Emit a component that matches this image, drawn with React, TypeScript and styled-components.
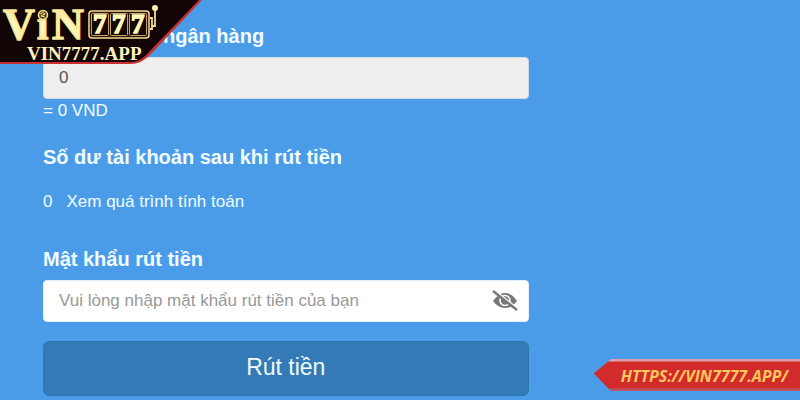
import React, { useState } from "react";
import styled, { createGlobalStyle } from "styled-components";

const GlobalStyle = createGlobalStyle`
  *, *::before, *::after { box-sizing: border-box; }
  body {
    margin: 0;
    background: #4b9ce8;
    color: #f1fdff;
    font-family: "Liberation Sans", Arial, sans-serif;
    font-size: 17px;
    line-height: 24px;
  }
`;

const Page = styled.div`
  position: relative;
  min-height: 100vh;
  padding: 24px 43px 4px;
  overflow: hidden;
`;

const Form = styled.form`
  display: flex;
  flex-direction: column;
  width: 68%;
  min-width: 280px;
`;

const Label = styled.label<{ $indent?: boolean }>`
  display: block;
  align-self: flex-start;
  margin-left: ${(p) => (p.$indent ? "120px" : "0")};
  font-size: 20px;
  font-weight: bold;
  line-height: 24px;
`;

const Field = styled.div`
  display: flex;
  flex-direction: column;
  gap: 9px;
`;

const InputBox = styled.div<{ $muted?: boolean }>`
  display: flex;
  align-items: center;
  height: 42px;
  padding: 0 9px 0 15px;
  border: 1px solid ${(p) => (p.$muted ? "#d3dce4" : "#e4f1fb")};
  border-radius: 4px;
  background: ${(p) => (p.$muted ? "#eeeeee" : "#ffffff")};
`;

const Input = styled.input`
  flex: 1;
  min-width: 0;
  padding: 0;
  border: 0;
  outline: 0;
  background: transparent;
  color: #555555;
  font: inherit;
  &::placeholder { color: #999999; opacity: 1; }
`;

const IconButton = styled.button`
  display: flex;
  padding: 0;
  border: 0;
  background: transparent;
  color: #777777;
  cursor: pointer;
`;

const Amount = styled.div`
  margin-bottom: 22px;
`;

const Balance = styled.section`
  display: flex;
  flex-direction: column;
  gap: 21px;
  margin-bottom: 33px;
`;

const Heading = styled.h2`
  margin: 0;
  font-size: 20px;
  line-height: 24px;
`;

const BalanceRow = styled.div`
  display: flex;
  gap: 14px;
`;

const Link = styled.a`
  color: inherit;
  text-decoration: none;
`;

const Submit = styled.button`
  height: 55px;
  margin-top: 19px;
  padding: 0 16px 4px;
  border: 1px solid #3073ae;
  border-radius: 6px;
  background: #337ab7;
  color: #f1fdff;
  font: inherit;
  font-size: 23px;
  cursor: pointer;
`;

const LogoBadge = styled.a`
  position: absolute;
  top: 0;
  left: 0;
  display: block;
`;

const LogoSvg = styled.svg`
  display: block;
  font-family: "Liberation Serif", serif;
  font-weight: bold;
`;

const ReelDigit = styled.text`
  font-size: 27px;
  fill: #fff8b8;
  stroke: #fff8b8;
  stroke-width: 1.5px;
`;

const Ribbon = styled.a`
  position: absolute;
  right: 0;
  bottom: 9px;
  height: 32px;
  padding: 2px 12px 0 27px;
  background: linear-gradient(#dda0ab 0 2px, #d12c2b 3px 29px, #bd5262 30px);
  clip-path: polygon(17px 0, 100% 0, 100% 100%, 17px 100%, 0 45%);
  color: #ffc65c;
  font: italic bold 16px/30px "Open Sans", sans-serif;
  text-decoration: none;
`;

const reels = [91, 110, 129];

function Logo() {
  return (
    <LogoSvg width="204" height="66" viewBox="0 0 204 66" role="img" aria-label="ViN777 VIN7777.APP">
      <defs>
        <linearGradient id="gold" x1="0" y1="0" x2="0" y2="1">
          <stop offset="0" stopColor="#f5dd8e" />
          <stop offset="0.5" stopColor="#fffbc0" />
          <stop offset="1" stopColor="#f3e58c" />
        </linearGradient>
      </defs>
      <path d="M0 0H202L151 54Q142 64 130 64H0Z" fill="#c9302f" />
      <path d="M0 0H199L149 52Q141 62 130 62H0Z" fill="#120505" />
      <g fill="url(#gold)" stroke="#f8e896" strokeWidth="1.4">
        <text x="3" y="39" fontSize="44">V</text>
        <text x="37" y="39" fontSize="41">i</text>
        <text x="52" y="39" fontSize="44">N</text>
      </g>
      <rect x="37" y="7" width="12" height="12" fill="#120505" />
      <circle cx="43" cy="15" r="4.5" fill="#59431d" stroke="#f6e79b" strokeWidth="1.5" />
      <path d="M40 14Q43 11 45 14L41 16L45 17" stroke="#f6e79b" fill="none" />
      <rect x="89" y="11" width="60" height="27" rx="3" fill="#2b1607" stroke="#f4dc97" strokeWidth="1.5" />
      {reels.map((x) => (
        <g key={x}>
          <rect x={x + 0.5} y="13.5" width="17" height="22" rx="1" fill="#160904" stroke="#c5a465" />
          <ReelDigit x={x + 2} y="33">7</ReelDigit>
        </g>
      ))}
      <path d="M150 18H152V29H150M152 26H155V11" fill="none" stroke="#f4dc97" strokeWidth="1.8" />
      <circle cx="155" cy="8" r="3" fill="#fff0ac" />
      <text x="27" y="60" fontSize="19" fill="#fff1bd">VIN7777.APP</text>
    </LogoSvg>
  );
}

function HiddenEye() {
  return (
    <svg width="28" height="24" viewBox="0 0 28 24" fill="none" aria-hidden="true">
      <path d="M2 12Q8 4 14 4Q21 4 26 12Q21 19 14 19Q7 19 2 12Z" fill="currentColor" />
      <circle cx="14" cy="11.5" r="5" stroke="#fff" strokeWidth="1.6" />
      <path d="M3 1L27 20" stroke="#fff" strokeWidth="2" />
      <path d="M2 2L26 21" stroke="currentColor" strokeWidth="2.4" />
    </svg>
  );
}

export default function App() {
  const [visible, setVisible] = useState(false);
  return (
    <>
      <GlobalStyle />
      <Page>
        <Form onSubmit={(e: React.FormEvent) => e.preventDefault()}>
          <Field>
            <Label htmlFor="bank" $indent>ngân hàng</Label>
            <InputBox $muted>
              <Input id="bank" value="0" readOnly />
            </InputBox>
          </Field>
          <Amount>= 0 VND</Amount>
          <Balance>
            <Heading>Số dư tài khoản sau khi rút tiền</Heading>
            <BalanceRow>
              <span>0</span>
              <Link href="#details">Xem quá trình tính toán</Link>
            </BalanceRow>
          </Balance>
          <Field>
            <Label htmlFor="password">Mật khẩu rút tiền</Label>
            <InputBox>
              <Input
                id="password"
                type={visible ? "text" : "password"}
                placeholder="Vui lòng nhập mật khẩu rút tiền của bạn"
              />
              <IconButton type="button" aria-label="Hiện mật khẩu" onClick={() => setVisible(!visible)}>
                <HiddenEye />
              </IconButton>
            </InputBox>
          </Field>
          <Submit type="submit">Rút tiền</Submit>
        </Form>
        <LogoBadge href="#home"><Logo /></LogoBadge>
        <Ribbon href="https://vin7777.app/">HTTPS://VIN7777.APP/</Ribbon>
      </Page>
    </>
  );
}
